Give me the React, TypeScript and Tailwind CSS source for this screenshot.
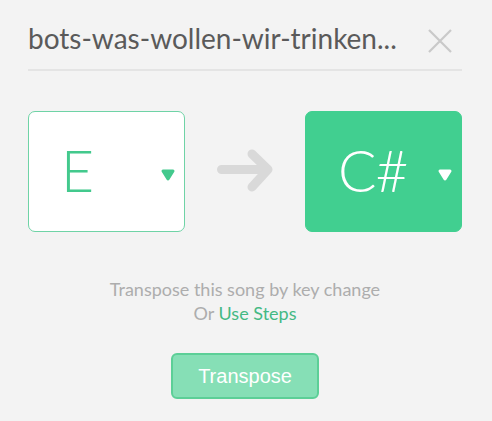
import { useState } from 'react'

const KEYS = ['C', 'C#', 'D', 'D#', 'E', 'F', 'F#', 'G', 'G#', 'A', 'A#', 'B']

function Caret({ className }: { className: string }) {
  return (
    <svg width="14" height="13" viewBox="0 0 14 13" className={className}>
      <path d="M2 1.5h10a1.5 1.5 0 0 1 1.3 2.2l-5 8a1.5 1.5 0 0 1-2.6 0l-5-8A1.5 1.5 0 0 1 2 1.5z" fill="currentColor" />
    </svg>
  )
}

type KeyBoxProps = {
  value: string
  active?: boolean
}

function KeyBox({ value, active }: KeyBoxProps) {
  const box = active
    ? 'bg-[#41cf90] border-[#41cf90] text-white'
    : 'bg-white border-[#6fd3a6] text-[#43c98d]'
  return (
    <div className={`flex h-[121px] w-[157px] items-center rounded-[7px] border pl-[32px] pr-[9px] ${box}`}>
      <span className="flex-1 text-[57px] font-light leading-none tracking-[-1px] pb-[2px]">{value}</span>
      <Caret className={`mt-[6px] ${active ? 'text-white' : 'text-[#43c98d]'}`} />
    </div>
  )
}

export default function App() {
  const [from] = useState(KEYS[4])
  const [to] = useState(KEYS[1])

  return (
    <div className="min-h-screen bg-[#f3f3f3] font-['Lato',sans-serif]">
      <div className="pl-[28px] pr-[30px]">
        {/* Song header */}
        <div className="flex items-start justify-between border-b-2 border-[#e4e4e4] pt-[20px] pb-[13px]">
          <h1 className="text-[28px] leading-[36px] text-[#5a5a5a]">bots-was-wollen-wir-trinken...</h1>
          <button className="mt-[9px] mr-[10px] text-[#c9c9c9]" aria-label="Close">
            <svg width="24" height="24" viewBox="0 0 24 24">
              <path d="M1 1L23 23M23 1L1 23" stroke="currentColor" strokeWidth="2.2" />
            </svg>
          </button>
        </div>

        {/* Key change */}
        <div className="mt-[40px] flex items-center justify-between">
          <KeyBox value={from} />
          <svg width="56" height="45" viewBox="0 0 56 45" className="text-[#d9d9d9]">
            <path d="M4.5 20.5H50M35 5l16 15.5L35 38" fill="none" stroke="currentColor" strokeWidth="9" strokeLinecap="round" strokeLinejoin="round" />
          </svg>
          <KeyBox value={to} active />
        </div>

        <div className="mt-[45px] text-center text-[18px] leading-[24px] text-[#adadad]">
          <p>Transpose this song by key change</p>
          <p>
            Or <a className="text-[#44b984]">Use Steps</a>
          </p>
        </div>

        <div className="mt-[28px] flex justify-center">
          <button className="h-[46px] w-[148px] rounded-[6px] border-2 border-[#5ccf97] bg-[#86dfb6] font-['Liberation_Sans',sans-serif] text-[20px] text-white">
            Transpose
          </button>
        </div>
      </div>
    </div>
  )
}
